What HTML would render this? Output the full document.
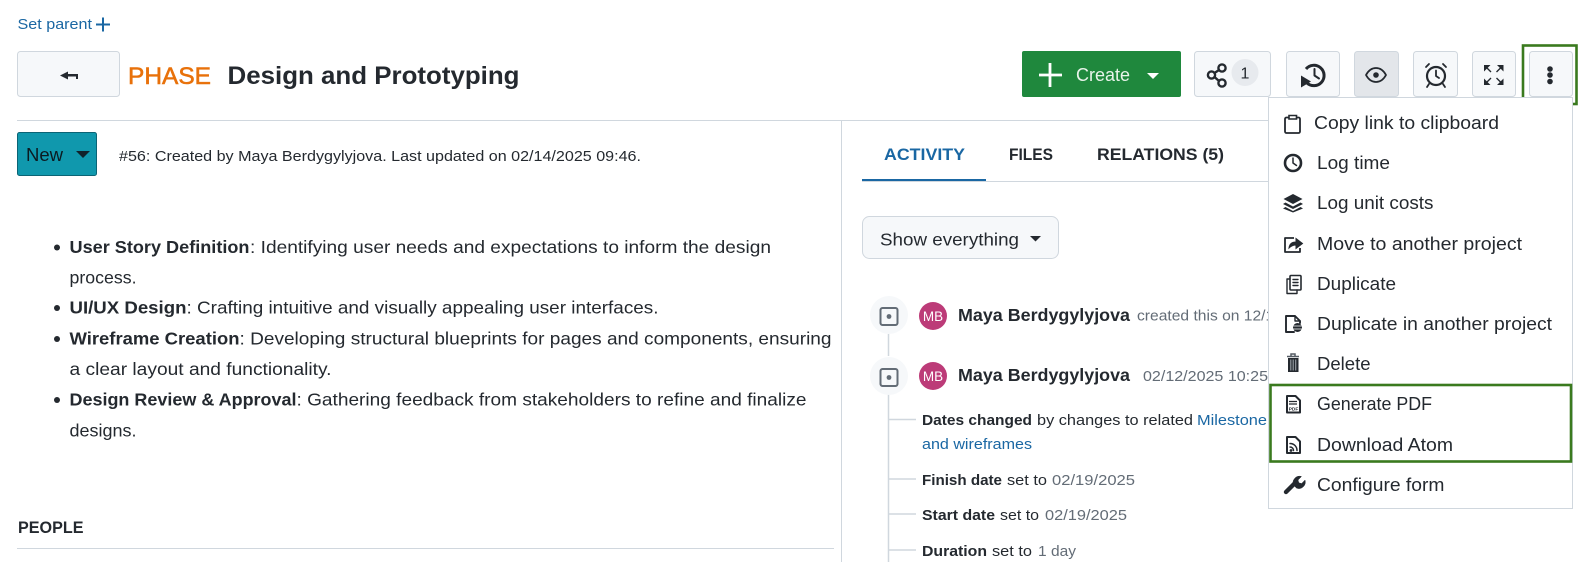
<!DOCTYPE html>
<html><head><meta charset="utf-8"><title>Design and Prototyping</title>
<style>
html,body{margin:0;padding:0;background:#fff;width:1591px;height:562px;overflow:hidden}
svg{display:block}
text{font-family:"Liberation Sans",sans-serif;fill:#24292f;white-space:pre}
.b{font-weight:700}
.m{font-size:18px}
.g{fill:#636c76}
.l{fill:#1a67a3}
.i{fill:none;stroke:#24292f;stroke-width:1.8;stroke-linecap:round;stroke-linejoin:round}
.btn{fill:#f6f8fa;stroke:#d0d7de}
</style></head><body>
<svg width="1591" height="562" viewBox="0 0 1591 562" xmlns="http://www.w3.org/2000/svg">
<!-- top -->
<text x="17.5" y="29" font-size="15" class="l" textLength="74.5" lengthAdjust="spacingAndGlyphs">Set parent</text>
<path d="M103 17.5v14M96 24.5h14" stroke="#1a67a3" stroke-width="2" fill="none"/>
<rect x="17.5" y="51.5" width="102" height="45" rx="3" class="btn"/>
<path d="M60 75.500l8-4v2.500h10v5h-2V76.500h-8v3z" fill="#24292f"/>
<text x="128" y="84" font-size="24" style="fill:#e8710a;stroke:#e8710a;stroke-width:.55" textLength="83" lengthAdjust="spacingAndGlyphs">PHASE</text>
<text x="227.500" y="84" font-size="25" class="b" textLength="292" lengthAdjust="spacingAndGlyphs">Design and Prototyping</text>
<!-- toolbar -->
<rect x="1022" y="51" width="159" height="46" rx="2" fill="#1f883d"/>
<path d="M1050 63v24M1039 75h23" stroke="#fff" stroke-width="2.8" fill="none"/>
<text x="1076" y="81" font-size="18" style="fill:#e8f3ea" textLength="54" lengthAdjust="spacingAndGlyphs">Create</text>
<path d="M1147 73h12l-6 6z" fill="#fff"/>
<rect x="1194.500" y="51.500" width="76" height="45" rx="3" class="btn"/>
<g class="i"><circle cx="1211.500" cy="75" r="3.600" style="stroke-width:2.400"/><circle cx="1222" cy="68" r="3.600" style="stroke-width:2.400"/><circle cx="1222" cy="83" r="3.600" style="stroke-width:2.400"/><path d="M1214.500 73l4.500-3M1214.500 77l4.500 4" style="stroke-width:2.400"/></g>
<circle cx="1245" cy="72.500" r="13.500" fill="#e7eaee"/>
<text x="1245" y="78.500" font-size="16" text-anchor="middle">1</text>
<rect x="1286.500" y="51.500" width="53" height="45" rx="3" class="btn"/>
<path d="M1306 69a10.200 10.200 0 1 1 1 14" class="i" style="stroke-width:3;stroke-linecap:butt"/>
<path d="M1314.500 69v6.500l4.500 3" class="i" style="stroke-width:2"/>
<path d="M1301 75.500l10 6-10 6z" fill="#24292f"/>
<rect x="1354.500" y="51.500" width="44" height="45" rx="3" fill="#e3e6ea" stroke="#d0d7de"/>
<path d="M1366 75c3-5.500 6.500-7 10-7s7 1.500 10 7c-3 5.500-6.500 7-10 7s-7-1.500-10-7z" class="i" style="stroke-width:1.800"/>
<circle cx="1376" cy="75" r="2.800" fill="#24292f"/>
<rect x="1413.500" y="51.500" width="44" height="45" rx="3" class="btn"/>
<circle cx="1436" cy="76" r="9" class="i" style="stroke-width:2.200"/>
<path d="M1436 70.500V76l3 2M1426 67l3-3M1446 67l-3-3M1429 84l-2 3M1443 84l2 3" class="i" style="stroke-width:1.800"/>
<rect x="1472.500" y="51.500" width="43" height="45" rx="3" class="btn"/>
<path d="M1484 65h6.500l-6.500 6.500zM1503.500 65H1497l6.500 6.500zM1484 85h6.500l-6.500-6.500zM1503.500 85H1497l6.500-6.500z" fill="#24292f"/>
<path d="M1486 67l5 5M1501.500 67l-5 5M1486 83l5-5M1501.500 83l-5-5" stroke="#24292f" stroke-width="1.400" fill="none"/>
<rect x="1529.500" y="51.500" width="43" height="45" rx="3" class="btn"/>
<circle cx="1550" cy="69" r="2.800" fill="#24292f"/><circle cx="1550" cy="75" r="2.800" fill="#24292f"/><circle cx="1550" cy="81.500" r="2.800" fill="#24292f"/>
<rect x="1523" y="45.500" width="53.500" height="58.500" fill="none" stroke="#3a7a1e" stroke-width="2.600"/>
<!-- dividers -->
<path d="M17 120.500H1268" stroke="#d0d7de" fill="none"/>
<path d="M841.500 120.500V562" stroke="#d0d7de" fill="none"/>
<!-- status -->
<rect x="17.500" y="132.500" width="79" height="43" rx="2" fill="#1098ad" stroke="#0b6475"/>
<text x="26" y="161" font-size="18" textLength="37" lengthAdjust="spacingAndGlyphs" style="fill:#0b1a20">New</text>
<path d="M76 151h14l-7 7z" fill="#10222a"/>
<text x="119" y="161" font-size="14.500" textLength="522" lengthAdjust="spacingAndGlyphs">#56: Created by Maya Berdygylyjova. Last updated on 02/14/2025 09:46.</text>
<!-- description -->
<g font-size="17.500">
<circle cx="57" cy="247.500" r="3" fill="#24292f"/><circle cx="57" cy="308" r="3" fill="#24292f"/><circle cx="57" cy="339" r="3" fill="#24292f"/><circle cx="57" cy="400" r="3" fill="#24292f"/>
<text x="69.500" y="253" class="b" textLength="180" lengthAdjust="spacingAndGlyphs">User Story Definition</text>
<text x="250" y="253" textLength="521" lengthAdjust="spacingAndGlyphs">: Identifying user needs and expectations to inform the design</text>
<text x="69.500" y="283.500" textLength="67" lengthAdjust="spacingAndGlyphs">process.</text>
<text x="69.500" y="313.500" class="b" textLength="117" lengthAdjust="spacingAndGlyphs">UI/UX Design</text>
<text x="186.500" y="313.500" textLength="472" lengthAdjust="spacingAndGlyphs">: Crafting intuitive and visually appealing user interfaces.</text>
<text x="69.500" y="344.500" class="b" textLength="170" lengthAdjust="spacingAndGlyphs">Wireframe Creation</text>
<text x="239.500" y="344.500" textLength="592" lengthAdjust="spacingAndGlyphs">: Developing structural blueprints for pages and components, ensuring</text>
<text x="69.500" y="375" textLength="262" lengthAdjust="spacingAndGlyphs">a clear layout and functionality.</text>
<text x="69.500" y="405.500" class="b" textLength="227" lengthAdjust="spacingAndGlyphs">Design Review &amp; Approval</text>
<text x="296.500" y="405.500" textLength="510" lengthAdjust="spacingAndGlyphs">: Gathering feedback from stakeholders to refine and finalize</text>
<text x="69.500" y="436.500" textLength="67" lengthAdjust="spacingAndGlyphs">designs.</text>
</g>
<text x="18" y="533" font-size="17" class="b" textLength="65.500" lengthAdjust="spacingAndGlyphs">PEOPLE</text>
<path d="M17 548.500H834" stroke="#d0d7de" fill="none"/>
<!-- tabs -->
<path d="M862 181.500H1268" stroke="#d0d7de" fill="none"/>
<rect x="862" y="179" width="124" height="2" fill="#1a67a3"/>
<text x="884" y="160" font-size="16.500" class="b l" textLength="81" lengthAdjust="spacingAndGlyphs">ACTIVITY</text>
<text x="1009" y="160" font-size="17" class="b" textLength="44" lengthAdjust="spacingAndGlyphs">FILES</text>
<text x="1097" y="160" font-size="16.500" class="b" textLength="127" lengthAdjust="spacingAndGlyphs">RELATIONS (5)</text>
<rect x="862.500" y="216.500" width="196" height="42" rx="7" class="btn"/>
<text x="880" y="245.500" font-size="17.500" textLength="139" lengthAdjust="spacingAndGlyphs">Show everything</text>
<path d="M1030 236h11l-5.500 5.500z" fill="#24292f"/>
<!-- activity -->
<path d="M888.500 334V356M888.500 394V562" stroke="#d0d7de" stroke-width="1.500" fill="none"/>
<path d="M889 419.500H916M889 479H916M889 514H916M889 550H916" stroke="#d0d7de" stroke-width="1.500" fill="none"/>
<circle cx="889" cy="315" r="19" fill="#f6f8fa"/><circle cx="889" cy="376" r="19" fill="#f6f8fa"/>
<rect x="880.500" y="308" width="17" height="17" rx="2" fill="none" stroke="#636c76" stroke-width="2"/><circle cx="889" cy="316.500" r="2.400" fill="#636c76"/>
<rect x="880.500" y="369" width="17" height="17" rx="2" fill="none" stroke="#636c76" stroke-width="2"/><circle cx="889" cy="377.500" r="2.400" fill="#636c76"/>
<circle cx="933" cy="316" r="14" fill="#bc3b78"/><circle cx="933" cy="376" r="14" fill="#bc3b78"/>
<text x="933" y="321" font-size="13.500" text-anchor="middle" style="fill:#fff">MB</text>
<text x="933" y="381" font-size="13.500" text-anchor="middle" style="fill:#fff">MB</text>
<text x="958" y="321" font-size="17.500" class="b" textLength="172" lengthAdjust="spacingAndGlyphs">Maya Berdygylyjova</text>
<text x="1137" y="320.500" font-size="15" class="g" textLength="185" lengthAdjust="spacingAndGlyphs">created this on 12/12/2024</text>
<text x="958" y="381" font-size="17.500" class="b" textLength="172" lengthAdjust="spacingAndGlyphs">Maya Berdygylyjova</text>
<text x="1143" y="381" font-size="15" class="g" textLength="125" lengthAdjust="spacingAndGlyphs">02/12/2025 10:25</text>
<g font-size="15">
<text x="922" y="425" class="b" textLength="110" lengthAdjust="spacingAndGlyphs">Dates changed</text>
<text x="1037" y="425" textLength="156" lengthAdjust="spacingAndGlyphs">by changes to related</text>
<text x="1197" y="425" class="l" textLength="70" lengthAdjust="spacingAndGlyphs">Milestone</text>
<text x="922" y="449" class="l" textLength="110" lengthAdjust="spacingAndGlyphs">and wireframes</text>
<text x="922" y="485" class="b" textLength="80" lengthAdjust="spacingAndGlyphs">Finish date</text>
<text x="1007" y="485" textLength="40" lengthAdjust="spacingAndGlyphs">set to</text>
<text x="1052" y="485" class="g" textLength="83" lengthAdjust="spacingAndGlyphs">02/19/2025</text>
<text x="922" y="520" class="b" textLength="73" lengthAdjust="spacingAndGlyphs">Start date</text>
<text x="1000" y="520" textLength="39" lengthAdjust="spacingAndGlyphs">set to</text>
<text x="1045" y="520" class="g" textLength="82" lengthAdjust="spacingAndGlyphs">02/19/2025</text>
<text x="922" y="556" class="b" textLength="65" lengthAdjust="spacingAndGlyphs">Duration</text>
<text x="992" y="556" textLength="40" lengthAdjust="spacingAndGlyphs">set to</text>
<text x="1038" y="556" class="g" textLength="38" lengthAdjust="spacingAndGlyphs">1 day</text>
</g>
<!-- menu -->
<rect x="1268.500" y="97.500" width="304" height="411" fill="#fff" stroke="#d0d7de"/>
<g class="m">
<text x="1314" y="129" textLength="185" lengthAdjust="spacingAndGlyphs">Copy link to clipboard</text>
<text x="1317" y="169" textLength="73" lengthAdjust="spacingAndGlyphs">Log time</text>
<text x="1317" y="209" textLength="116.500" lengthAdjust="spacingAndGlyphs">Log unit costs</text>
<text x="1317" y="250" textLength="205" lengthAdjust="spacingAndGlyphs">Move to another project</text>
<text x="1317" y="290" textLength="79" lengthAdjust="spacingAndGlyphs">Duplicate</text>
<text x="1317" y="330" textLength="235" lengthAdjust="spacingAndGlyphs">Duplicate in another project</text>
<text x="1317" y="370" textLength="53.500" lengthAdjust="spacingAndGlyphs">Delete</text>
<text x="1317" y="410" textLength="115" lengthAdjust="spacingAndGlyphs">Generate PDF</text>
<text x="1317" y="451" textLength="136" lengthAdjust="spacingAndGlyphs">Download Atom</text>
<text x="1317" y="491" textLength="127.500" lengthAdjust="spacingAndGlyphs">Configure form</text>
</g>
<!-- menu icons -->
<rect x="1285" y="117.500" width="15" height="15.500" rx="1.500" class="i"/>
<path d="M1289 115.500h7.500v3.500h-7.500z" fill="#fff" stroke="#24292f" stroke-width="1.600"/>
<circle cx="1293" cy="163" r="8" class="i" style="stroke-width:2.600"/>
<path d="M1293 158v5l3.500 2.500" class="i" style="stroke-width:1.500"/>
<path d="M1293 194l9.500 5-9.500 5-9.500-5z" fill="#24292f"/>
<path d="M1285.500 202.500l7.500 4 7.500-4 2.500 1.500-10 5-10-5zM1285.500 207l7.500 4 7.500-4 2.500 1.500-10 4-10-4z" fill="#24292f"/>
<path d="M1294 238h-9v14h15v-4" class="i" style="stroke-width:1.800;stroke-linecap:butt"/>
<path d="M1289 248c.5-4 3-6 7-6v-3.500l6.500 5-6.500 5V245c-3 0-5 1-7 3z" fill="#24292f" stroke="#24292f"/>
<rect x="1290" y="275.500" width="11" height="14.500" rx="1" class="i" style="stroke-width:1.600"/>
<path d="M1290 279h-3v14.500h10v-3.500M1293 279.500h5M1293 282.500h5M1293 285.500h5" class="i" style="stroke-width:1.400"/>
<path d="M1294 332h-8v-16h9l5 5v2" class="i" style="stroke-width:1.900"/>
<path d="M1295 316v5h5" class="i" style="stroke-width:1.400"/>
<ellipse cx="1297.500" cy="327.500" rx="4.500" ry="4.500" fill="#24292f"/>
<path d="M1293 326h9M1293 329h9" stroke="#fff" stroke-width=".8"/>
<path d="M1287 356.500h12M1291 356v-2h4v2" stroke="#555c64" stroke-width="1.500" fill="none"/>
<rect x="1288" y="358" width="10.500" height="14" fill="#24292f"/>
<path d="M1290.800 359.500v11M1293.200 359.500v11M1295.700 359.500v11" stroke="#9aa0a6" stroke-width="1.100"/>
<path d="M1287 396h8.500l4.500 4.500V412.500h-13z" class="i" style="stroke-width:2;stroke-linecap:butt"/>
<path d="M1289 401.500h8M1289 404h8" stroke="#24292f" stroke-width="1.200"/>
<text x="1293.500" y="410.500" font-size="4.800" class="b" text-anchor="middle">PDF</text>
<path d="M1287 437h8.500l4.500 4.500V453H1287z" class="i" style="stroke-width:2;stroke-linecap:butt"/>
<path d="M1290 443.500c4 0 7 3 7 7M1290 447c2 0 3.500 1.500 3.500 3.500" class="i" style="stroke-width:1.500"/>
<circle cx="1291" cy="450.500" r="1.400" fill="#24292f"/>
<path d="M1286 492l10-10" stroke="#24292f" stroke-width="4.400" stroke-linecap="round" fill="none"/>
<path d="M1293.500 485a6.500 6.500 0 0 1 8-8.500l-3.500 3.500.8 2.800 2.800.8 3.400-3.500a6.500 6.500 0 0 1-8.500 8z" fill="#24292f" stroke="#24292f" stroke-width=".5"/>
<rect x="1270.500" y="385" width="300.500" height="76.500" fill="none" stroke="#3a7a1e" stroke-width="2.600"/>
</svg>
</body></html>
